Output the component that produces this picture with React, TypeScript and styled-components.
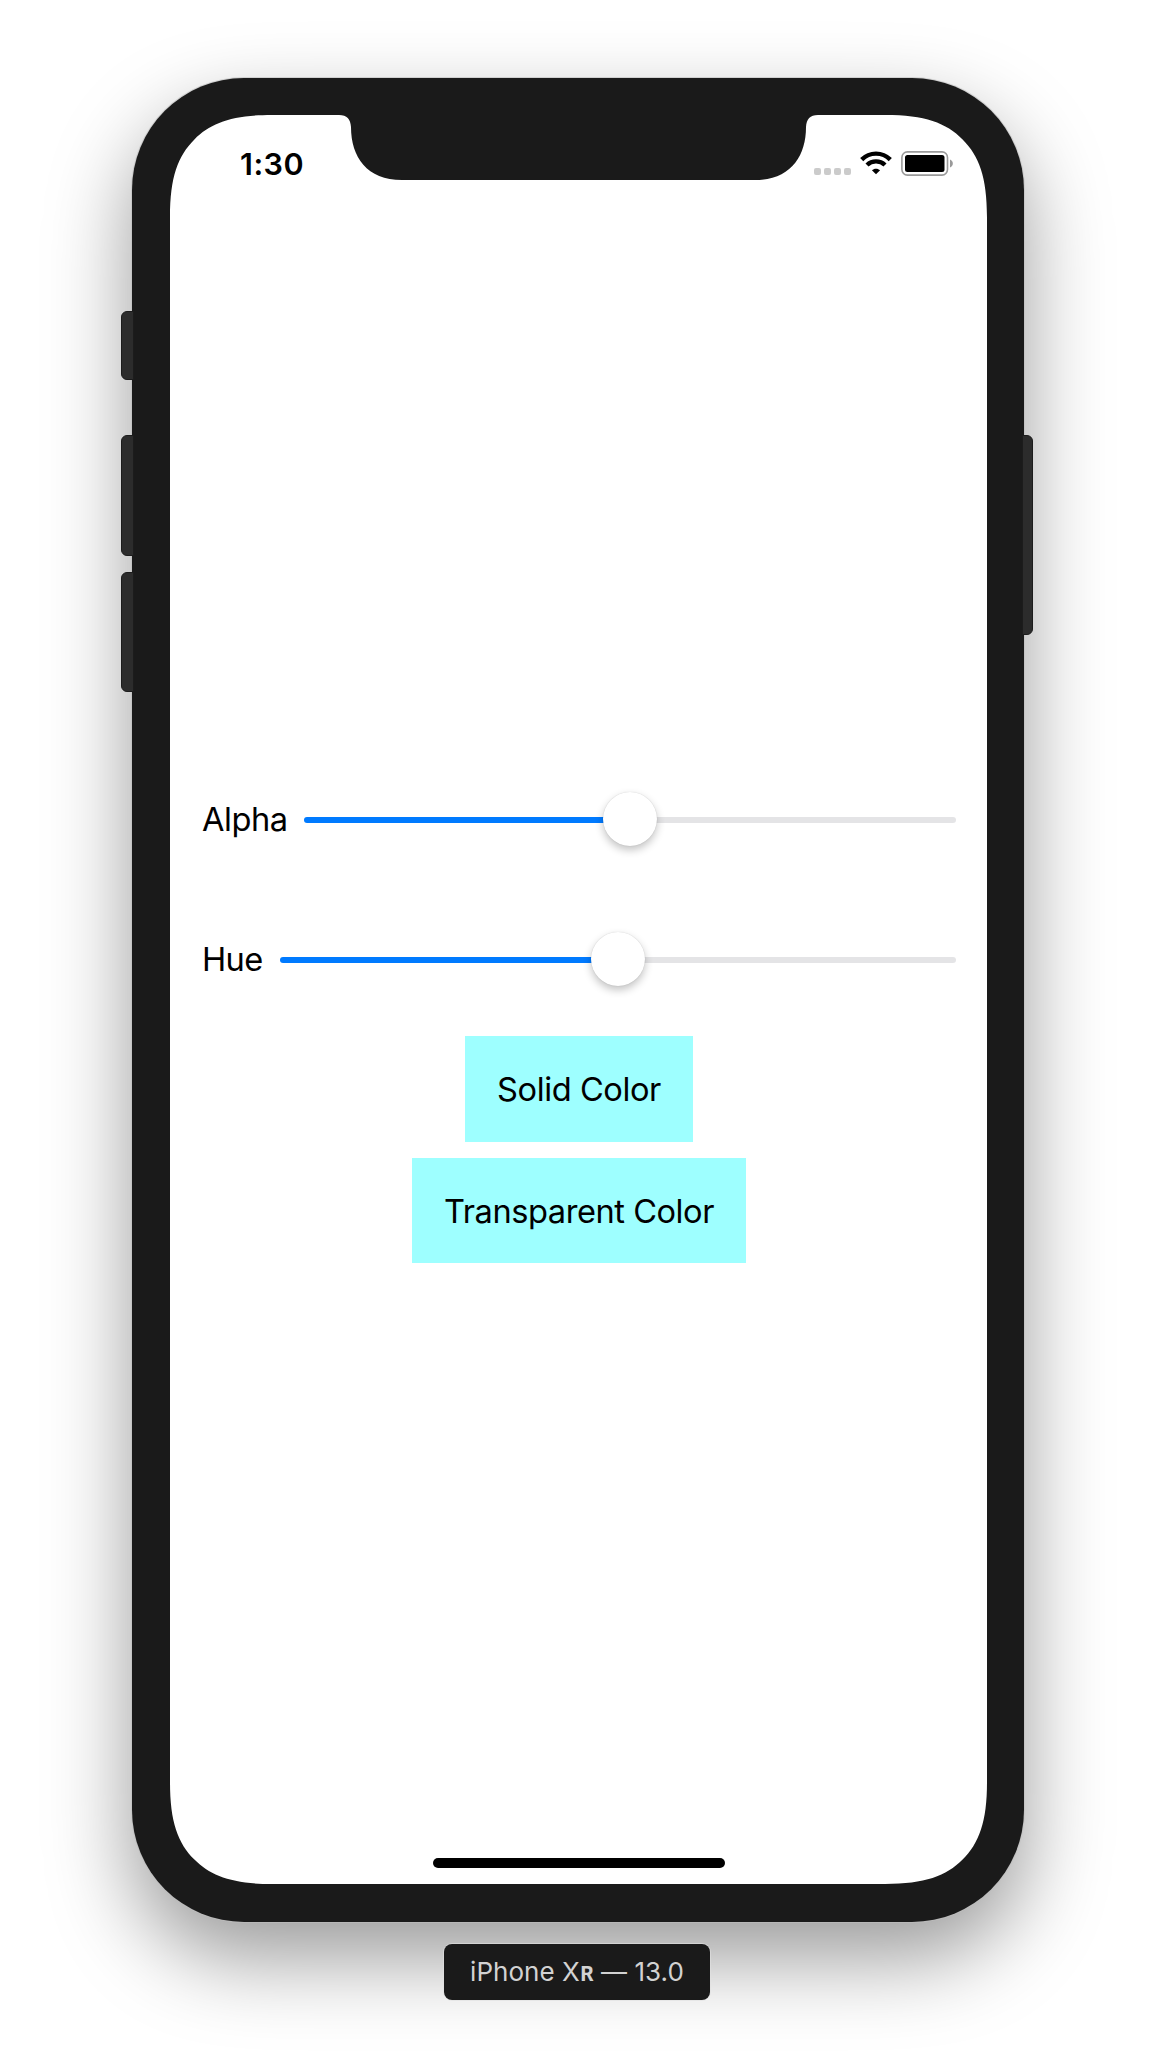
import React, { useState } from "react";
import styled, { createGlobalStyle } from "styled-components";

const SCREEN_W = 817;
const SCREEN_H = 1769;

/*
 * Continuous-curvature corners with the sensor housing cut from the top edge.
 * Each corner is two curves that meet on its diagonal.
 */
const screenOutline = (w: number, h: number) => {
  const a = 102;
  const b = 62;
  const m = 24.4;
  const far = m + 16.5;
  const near = m - 16.5;
  return [
    `M${a} 0 L169 0 C177 0 180.500 4 181 12`,
    `C181 42 197 65 232 65 L585 65`,
    `C620 65 636 42 636 12 C636.500 4 640 0 648 0`,
    `L${w - a} 0 C${w - b} 0 ${w - far} ${near} ${w - m} ${m}`,
    `C${w - near} ${far} ${w} ${b} ${w} ${a}`,
    `L${w} ${h - a} C${w} ${h - b} ${w - near} ${h - far} ${w - m} ${h - m}`,
    `C${w - far} ${h - near} ${w - b} ${h} ${w - a} ${h}`,
    `L${a} ${h} C${b} ${h} ${far} ${h - near} ${m} ${h - m}`,
    `C${near} ${h - far} 0 ${h - b} 0 ${h - a}`,
    `L0 ${a} C0 ${b} ${near} ${far} ${m} ${m}`,
    `C${far} ${near} ${b} 0 ${a} 0 Z`,
  ].join(" ");
};

const GlobalStyle = createGlobalStyle`
  * { box-sizing: border-box; }
  body {
    margin: 0;
    background: #fff;
    font-family: Inter, "Liberation Sans", sans-serif;
    color: #000;
  }
`;

const Desktop = styled.main`
  display: flex;
  flex-direction: column;
  align-items: center;
  width: 1156px;
  height: 2072px;
  padding-top: 78px;
  overflow: hidden;
`;

const Device = styled.div`
  display: grid;
  grid-template-columns: 11px 892px 11px;
`;

const Rail = styled.div<{ $top: number }>`
  display: flex;
  flex-direction: column;
  padding-top: ${(p) => p.$top}px;
  z-index: 1;
`;

const HardwareKey = styled.div<{ $height: number; $gap?: number; $side: "left" | "right" }>`
  flex: none;
  width: ${(p) => (p.$side === "left" ? 13 : 11)}px;
  height: ${(p) => p.$height}px;
  margin-top: ${(p) => p.$gap ?? 0}px;
  margin-left: ${(p) => (p.$side === "left" ? 0 : -2)}px;
  border: 1px solid #1c1c1c;
  border-radius: ${(p) => (p.$side === "left" ? "6px 0 0 6px" : "0 6px 6px 0")};
  background: #2c2c2c;
`;

const Bezel = styled.div`
  height: 1844px;
  padding: 37px 37px 38px 38px;
  border-radius: 112px;
  background: #1a1a1a;
  box-shadow: 0 0 0 1px rgba(190, 190, 190, 0.6), 0 36px 84px rgba(0, 0, 0, 0.4);
`;

const Screen = styled.div`
  display: flex;
  flex-direction: column;
  align-items: center;
  width: ${SCREEN_W}px;
  height: ${SCREEN_H}px;
  background: #fff;
  clip-path: path("${screenOutline(SCREEN_W, SCREEN_H)}");
`;

const StatusBar = styled.header`
  display: flex;
  justify-content: space-between;
  align-self: stretch;
  height: 87px;
  padding: 31px 33px 0 70px;
`;

const Clock = styled.time`
  font-size: 30.5px;
  font-weight: 600;
  line-height: 36px;
  letter-spacing: 0.5px;
`;

const Indicators = styled.div`
  display: flex;
  padding-top: 5px;
`;

const SignalDots = styled.div`
  display: flex;
  gap: 3px;
  padding-top: 17px;
  margin-right: 9px;
`;

const SignalDot = styled.i`
  width: 7px;
  height: 7px;
  border-radius: 2px;
  background: #cbcbcb;
`;

const Form = styled.section`
  display: flex;
  flex-direction: column;
  align-items: center;
  align-self: stretch;
  padding: 565px 31px 0 32px;
`;

const SliderRow = styled.label<{ $labelWidth: number }>`
  display: grid;
  grid-template-columns: ${(p) => p.$labelWidth}px 1fr;
  align-items: center;
  align-self: stretch;
  height: 106px;
  & + & {
    margin-top: 34px;
  }
  > span {
    padding-bottom: 2px;
  }
`;

const Label = styled.span<{ $tracking: number }>`
  font-size: 32.6px;
  line-height: 40px;
  letter-spacing: ${(p) => p.$tracking}px;
  white-space: nowrap;
`;

const Slider = styled.input`
  appearance: none;
  width: 100%;
  height: 54px;
  margin: 0;
  background: transparent;
  outline: none;

  &::-webkit-slider-runnable-track {
    height: 6px;
    border-radius: 3px;
    background: linear-gradient(to right, #007aff 50%, #e4e4e6 50%);
  }

  &::-webkit-slider-thumb {
    appearance: none;
    width: 54px;
    height: 54px;
    margin-top: -25px;
    border-radius: 50%;
    background: #fff;
    box-shadow: 0 0 1px rgba(0, 0, 0, 0.2), 0 4px 9px rgba(0, 0, 0, 0.24);
  }
`;

const Swatches = styled.div`
  display: flex;
  flex-direction: column;
  align-items: center;
  gap: 16px;
  margin-top: 23px;
`;

const Swatch = styled.button<{ $width: number }>`
  display: flex;
  align-items: center;
  justify-content: center;
  width: ${(p) => p.$width}px;
  height: 105.700px;
  padding: 0;
  border: 0;
  background: #9effff;
  color: #000;
  font-family: inherit;
`;

const HomeIndicator = styled.div`
  width: 292px;
  height: 10px;
  margin-top: auto;
  margin-bottom: 16px;
  border-radius: 5px;
  background: #000;
`;

const DeviceName = styled.footer`
  display: flex;
  align-items: center;
  justify-content: center;
  width: 266px;
  height: 56px;
  margin-top: 22px;
  margin-right: 2px;
  border-radius: 8px;
  background: #1a1a1a;
  box-shadow: 0 0 0 1px rgba(225, 225, 225, 0.6);
  color: #d2d2d2;
  font-size: 26px;
  line-height: 32px;
  letter-spacing: 0.05px;
  white-space: pre;
  z-index: 1;
`;

const SmallCap = styled.span`
  margin: 0 -1px;
  font-size: 27px;
  font-weight: 600;
  transform: scaleX(0.84);
`;

const WifiIcon = () => (
  <svg width="32" height="24" viewBox="0 0 32 24" style={{ marginRight: 9 }}>
    <g fill="none" stroke="#000" strokeWidth="4.400">
      <path d="M1.700 8.600 C9.700 0.600 22.300 0.600 30.300 8.600" />
      <path d="M7 14 C12 9.200 20 9.200 25 14" />
    </g>
    <path d="M16 23.300 L11.900 19.200 C14.200 17.100 17.800 17.100 20.100 19.200 Z" />
  </svg>
);

const BatteryIcon = () => (
  <svg width="53" height="25" viewBox="0 0 53 25">
    <rect x="0.900" y="0.900" width="45.600" height="23.200" rx="5.500" fill="none" stroke="#9a9a9a" strokeWidth="1.600" />
    <rect x="4" y="4" width="39.500" height="17" rx="2.500" />
    <path d="M49 8.500 C52.800 10 52.800 15 49 16.500 Z" fill="#9a9a9a" />
  </svg>
);

export default function App() {
  const [alpha, setAlpha] = useState(50);
  const [hue, setHue] = useState(50);

  return (
    <>
      <GlobalStyle />
      <Desktop>
        <Device>
          <Rail $top={233}>
            <HardwareKey $side="left" $height={69} />
            <HardwareKey $side="left" $height={121} $gap={55} />
            <HardwareKey $side="left" $height={120} $gap={16} />
          </Rail>
          <Bezel>
            <Screen>
              <StatusBar>
                <Clock>1:30</Clock>
                <Indicators>
                  <SignalDots>
                    <SignalDot />
                    <SignalDot />
                    <SignalDot />
                    <SignalDot />
                  </SignalDots>
                  <WifiIcon />
                  <BatteryIcon />
                </Indicators>
              </StatusBar>
              <Form>
                <SliderRow $labelWidth={102}>
                  <Label $tracking={-0.45}>Alpha</Label>
                  <Slider type="range" value={alpha} onChange={(e) => setAlpha(+e.target.value)} />
                </SliderRow>
                <SliderRow $labelWidth={77.7}>
                  <Label $tracking={-0.6}>Hue</Label>
                  <Slider type="range" value={hue} onChange={(e) => setHue(+e.target.value)} />
                </SliderRow>
                <Swatches>
                  <Swatch $width={228}>
                    <Label $tracking={-0.4}>Solid Color</Label>
                  </Swatch>
                  <Swatch $width={334}>
                    <Label $tracking={-0.45}>Transparent Color</Label>
                  </Swatch>
                </Swatches>
              </Form>
              <HomeIndicator />
            </Screen>
          </Bezel>
          <Rail $top={357}>
            <HardwareKey $side="right" $height={200} />
          </Rail>
        </Device>
        <DeviceName>
          iPhone X<SmallCap>ʀ</SmallCap> — 13.0
        </DeviceName>
      </Desktop>
    </>
  );
}
